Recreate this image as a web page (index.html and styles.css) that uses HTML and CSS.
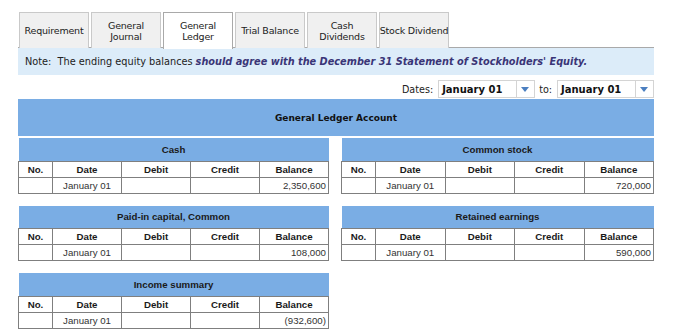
FILE: index.html
```html
<!DOCTYPE html>
<html>
<head>
<meta charset="utf-8">
<link rel="stylesheet" href="styles.css">
</head>
<body>
<div class="page">
  <div class="tabs">
    <div class="tab">Requirement</div>
    <div class="tab">General<br>Journal</div>
    <div class="tab active">General<br>Ledger</div>
    <div class="tab">Trial Balance</div>
    <div class="tab">Cash<br>Dividends</div>
    <div class="tab">Stock Dividend</div>
  </div>
  <div class="note">Note:&nbsp; The ending equity balances <em>should agree with the December 31 Statement of Stockholders' Equity.</em></div>
  <div class="dates">
    <span class="lbl">Dates:</span>
    <div class="sel"><span class="val">January 01</span><span class="arr"></span></div>
    <span class="lbl">to:</span>
    <div class="sel"><span class="val">January 01</span><span class="arr"></span></div>
  </div>
  <div class="glhead">General Ledger Account</div>
  <div class="grid">
    <table class="acct">
      <colgroup><col class="c-no"><col class="c-d"><col class="c-d"><col class="c-d"><col class="c-d"></colgroup>
      <tr><th class="title" colspan="5">Cash</th></tr>
      <tr class="hdr"><th>No.</th><th>Date</th><th>Debit</th><th>Credit</th><th>Balance</th></tr>
      <tr class="row"><td></td><td class="date">January 01</td><td></td><td></td><td class="num">2,350,600</td></tr>
    </table>
    <table class="acct">
      <colgroup><col class="c-no"><col class="c-d"><col class="c-d"><col class="c-d"><col class="c-d"></colgroup>
      <tr><th class="title" colspan="5">Common stock</th></tr>
      <tr class="hdr"><th>No.</th><th>Date</th><th>Debit</th><th>Credit</th><th>Balance</th></tr>
      <tr class="row"><td></td><td class="date">January 01</td><td></td><td></td><td class="num">720,000</td></tr>
    </table>
    <table class="acct">
      <colgroup><col class="c-no"><col class="c-d"><col class="c-d"><col class="c-d"><col class="c-d"></colgroup>
      <tr><th class="title" colspan="5">Paid-in capital, Common</th></tr>
      <tr class="hdr"><th>No.</th><th>Date</th><th>Debit</th><th>Credit</th><th>Balance</th></tr>
      <tr class="row"><td></td><td class="date">January 01</td><td></td><td></td><td class="num">108,000</td></tr>
    </table>
    <table class="acct">
      <colgroup><col class="c-no"><col class="c-d"><col class="c-d"><col class="c-d"><col class="c-d"></colgroup>
      <tr><th class="title" colspan="5">Retained earnings</th></tr>
      <tr class="hdr"><th>No.</th><th>Date</th><th>Debit</th><th>Credit</th><th>Balance</th></tr>
      <tr class="row"><td></td><td class="date">January 01</td><td></td><td></td><td class="num">590,000</td></tr>
    </table>
    <table class="acct">
      <colgroup><col class="c-no"><col class="c-d"><col class="c-d"><col class="c-d"><col class="c-d"></colgroup>
      <tr><th class="title" colspan="5">Income summary</th></tr>
      <tr class="hdr"><th>No.</th><th>Date</th><th>Debit</th><th>Credit</th><th>Balance</th></tr>
      <tr class="row"><td></td><td class="date">January 01</td><td></td><td></td><td class="num">(932,600)</td></tr>
    </table>
  </div>
</div>
</body>
</html>
```

FILE: styles.css
```css
* { box-sizing: border-box; }
html, body { margin: 0; padding: 0; background: #fff; }
body { font-family: "DejaVu Sans", Verdana, sans-serif; color: #222; }

.page {
  width: 636px;
  margin-left: 18px;
  padding-top: 12px;
}

.tabs {
  display: flex;
  gap: 2px;
  padding-left: 1px;
  border-bottom: 1px solid #a9a9a9;
  height: 36px;
}
.tab {
  width: 70px;
  height: 36px;
  background: #f0f0f0;
  border: 1px solid #c9c9c9;
  border-bottom: none;
  display: flex;
  align-items: center;
  justify-content: center;
  text-align: center;
  font-size: 9.5px;
  line-height: 11px;
  color: #222;
  letter-spacing: -0.2px;
  white-space: nowrap;
}
.tab.active {
  background: #fff;
  border-color: #a9a9a9;
  height: 37px;
  margin-bottom: -1px;
  position: relative;
}

.note {
  height: 27px;
  background: #dcecf9;
  display: flex;
  align-items: center;
  padding-left: 7px;
  font-size: 9.75px;
  color: #222;
  white-space: nowrap;
}
.note em {
  font-style: italic;
  font-weight: bold;
  color: #3a3577;
  margin-left: 3px;
}

.dates {
  display: flex;
  justify-content: flex-end;
  align-items: center;
  margin-top: 5px;
  height: 18px;
  font-size: 9.6px;
}
.dates .lbl { margin-right: 5px; color: #222; }
.dates .sel + .lbl { margin-left: 4px; }
.sel {
  width: 97px;
  height: 18px;
  border: 1px solid #d4d4d4;
  display: flex;
  align-items: stretch;
  background: #fff;
}
.sel .val {
  flex: 1;
  font-weight: bold;
  font-size: 10px;
  padding-left: 3px;
  display: flex;
  align-items: center;
  color: #111;
}
.sel .arr {
  width: 18px;
  border-left: 1px solid #d4d4d4;
  position: relative;
}
.sel .arr::after {
  content: "";
  position: absolute;
  left: 4px;
  top: 6px;
  border-left: 4.5px solid transparent;
  border-right: 4.5px solid transparent;
  border-top: 5px solid #4b7fc0;
}

.glhead {
  margin-top: 1px;
  height: 37px;
  background: #7aade4;
  display: flex;
  align-items: center;
  justify-content: center;
  font-weight: bold;
  font-size: 9px;
  color: #111;
}

.grid {
  margin-top: 2px;
  display: grid;
  grid-template-columns: 311px 313px;
  column-gap: 12px;
  row-gap: 12px;
  align-items: start;
}

.acct {
  border-collapse: collapse;
  table-layout: fixed;
  width: 100%;
  font-family: "Liberation Sans", Arial, sans-serif;
  font-size: 9.7px;
  color: #222;
}
.acct .c-no { width: 34px; }
.acct th, .acct td {
  border: 1px solid #7f7f7f;
  padding: 0 2px;
  white-space: nowrap;
  overflow: hidden;
}
.acct th.title {
  background: #7aade4;
  border: none;
  height: 23px;
  font-weight: bold;
  color: #1a1a1a;
  text-align: center;
}
.acct .hdr th {
  height: 16px;
  font-weight: bold;
  text-align: center;
  color: #1a1a1a;
}
.acct .row td {
  height: 16px;
  color: #333;
}
.acct td.date { text-align: center; }
.acct td.num { text-align: right; }
```
